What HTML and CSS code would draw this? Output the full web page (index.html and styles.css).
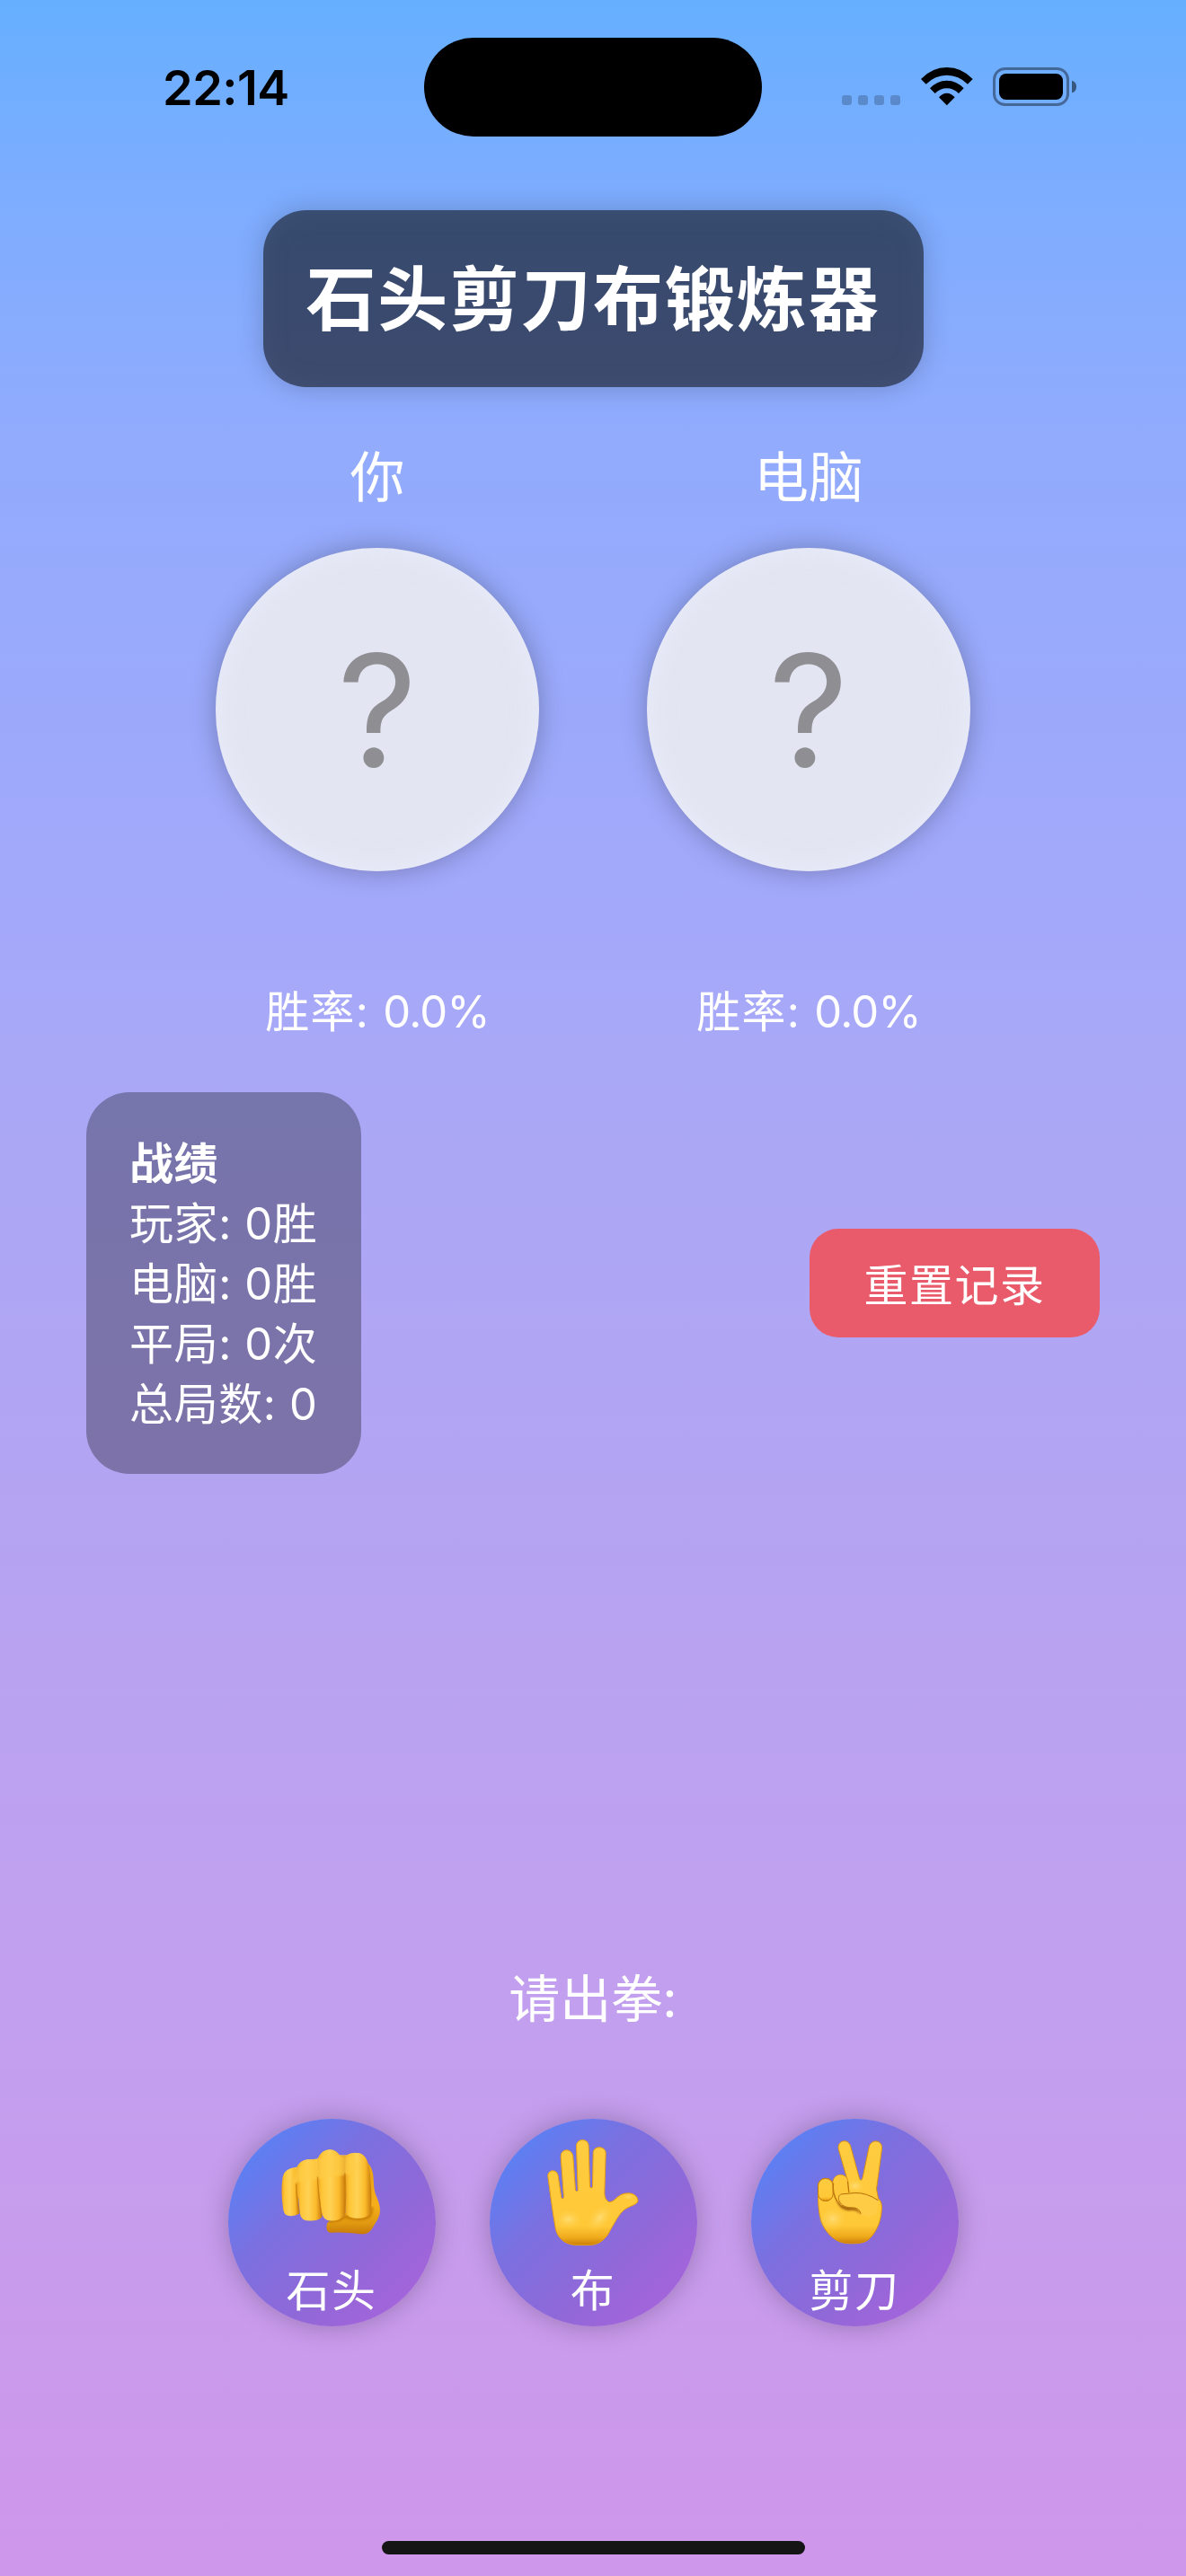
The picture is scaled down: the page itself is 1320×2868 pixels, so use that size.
FILE: index.html
```html
<!DOCTYPE html>
<html lang="zh-CN">
<head>
  <meta charset="UTF-8">
  <meta name="viewport" content="width=device-width, initial-scale=1.0">
  <title>石头剪刀布锻炼器</title>
  <link rel="stylesheet" href="styles.css">
</head>
<body>
  <div class="status-bar">
    <div class="time">22:14</div>
    <div class="island"></div>
    <div class="status-icons">
      <svg class="signal" width="65" height="11" viewBox="0 0 65 11">
        <rect x="0" y="0" width="11" height="11" rx="3"/>
        <rect x="18" y="0" width="11" height="11" rx="3"/>
        <rect x="36" y="0" width="11" height="11" rx="3"/>
        <rect x="54" y="0" width="11" height="11" rx="3"/>
      </svg>
      <svg class="wifi" width="58" height="43" viewBox="374 75 174 129">
        <path d="M374 114 Q411 75 460.500 75 Q510 75 547 114 L530 131 Q500 101 460.500 101 Q421 101 391 131Z"/>
        <path d="M404 145 Q428 119 460.500 119 Q493 119 517 145 L500 162 Q483 145 460.500 145 Q438 145 421 162Z"/>
        <path d="M434 175 Q445 161 460.500 161 Q476 161 487 175 L460.500 202Z"/>
      </svg>
      <svg class="battery" width="93" height="43" viewBox="0 0 279 129">
        <rect x="4.500" y="4.500" width="246" height="120" rx="36" fill="none" stroke="#000" stroke-opacity=".4" stroke-width="9"/>
        <rect x="21" y="21" width="213" height="87" rx="23"/>
        <path d="M264 44 Q279 48 279 64.500 Q279 81 264 85Z" fill-opacity=".5"/>
      </svg>
    </div>
  </div>

  <main>
    <h1 class="title">石头剪刀布锻炼器</h1>

    <div class="players">
      <div class="player">
        <div class="name">你</div>
        <div class="hand">?</div>
        <div class="rate">胜率: <span>0.0%</span></div>
      </div>
      <div class="player">
        <div class="name">电脑</div>
        <div class="hand">?</div>
        <div class="rate">胜率: <span>0.0%</span></div>
      </div>
    </div>

    <div class="record-row">
      <div class="record">
        <div class="record-title">战绩</div>
        <div>玩家: 0胜</div>
        <div>电脑: 0胜</div>
        <div>平局: 0次</div>
        <div>总局数: 0</div>
      </div>
      <button class="reset">重置记录</button>
    </div>

    <div class="prompt">请出拳:</div>

    <div class="choices">
      <button class="choice">
        <svg viewBox="208.500 110 360 380">
          <defs>
            <linearGradient id="finger" x1="0" x2="1" y1="0" y2="0">
              <stop offset="0" stop-color="#e9a11c"/>
              <stop offset=".16" stop-color="#ffc536"/>
              <stop offset=".45" stop-color="#ffd255"/>
              <stop offset=".76" stop-color="#fbbb2c"/>
              <stop offset="1" stop-color="#c77808"/>
            </linearGradient>
            <linearGradient id="thumb" x1="0" x2="0" y1="0" y2="1">
              <stop offset="0" stop-color="#e9a116"/>
              <stop offset=".6" stop-color="#f6ae1b"/>
              <stop offset=".85" stop-color="#e09910"/>
              <stop offset="1" stop-color="#c77a08"/>
            </linearGradient>
            <linearGradient id="skin" x1="0" x2="0" y1="0" y2="1">
              <stop offset="0" stop-color="#ffcc40"/>
              <stop offset=".82" stop-color="#ffc837"/>
              <stop offset=".93" stop-color="#efaa1c"/>
              <stop offset="1" stop-color="#cb7d08"/>
            </linearGradient>
            <radialGradient id="glow">
              <stop offset="0" stop-color="#ffdc72"/>
              <stop offset="1" stop-color="#ffcc40" stop-opacity="0"/>
            </radialGradient>
            <filter id="soft" x="-20%" y="-20%" width="140%" height="140%">
              <feGaussianBlur stdDeviation="3"/>
            </filter>
          </defs>
          <path fill="url(#thumb)" d="M500 200 Q520 205 526 235 C531 262 527 286 537 311 C549 338 553 356 549 374 C545 390 534 404 526 419 C516 437 502 442 484 440 C449 437 420 433 392 436 C377 437 371 430 372 414 Q372 398 388 396 L430 380Z"/>
          <path d="M380 397 Q415 398 433 382 Q465 396 508 385 Q523 378 523 350" fill="none" stroke="#b56a05" stroke-width="10" opacity=".6" filter="url(#soft)"/>
          <path fill="#ffc940" d="M240 228 Q255 218 273 217 Q283 195 305 192 Q325 192 342 189 Q355 158 384 158 Q404 159 415 177 L438 177 Q463 162 490 174 L500 300 L250 320Z"/>
          <path fill="url(#finger)" d="M245 224 Q260 217 270 223 L281 373 Q260 383 243 379 Q230 377 227 357 Q218 300 225 252 Q229 231 245 224Z"/>
          <path fill="url(#finger)" d="M272 221 Q283 194 308 191 L335 191 Q348 280 357 383 Q344 397 315 396 Q287 397 283 372 Q274 300 272 221Z"/>
          <path fill="url(#finger)" d="M340 195 Q354 158 382 158 Q403 159 415 177 L436 181 L434 374 Q418 397 386 396 Q359 396 354 364 Q344 280 340 195Z"/>
          <path fill="url(#finger)" d="M436 178 Q458 167 483 170 Q505 176 514 215 Q524 285 521 355 Q519 386 481 388 Q434 389 434 357Z"/>
          <path d="M272 220 L331 193 L390 175 L454 183 L479 220 L450 240 L260 270Z" fill="#ffce48" filter="url(#soft)" opacity=".65"/>
          <path d="M270 273 Q272 330 280 370 M342 249 Q344 318 356 378 M433 236 Q438 315 432 374" fill="none" stroke="#c67a0c" stroke-width="4" opacity=".7"/>
        </svg>
        <span>石头</span>
      </button>
      <button class="choice">
        <svg viewBox="211.500 110 360 380">
          <path fill="url(#skin)" stroke="#e59b14" stroke-width="3" d="M241 249 C238 224 271 222 275 245 L286 319 Q290 326 294 319 L284 183 C282 153 322 152 325 182 L333 294 Q337 302 341 294 L336 147 C336 119 377 119 377 147 L381 283 Q386 291 390 283 L392 170 C392 143 435 145 434 171 L430 303 C430 320 439 335 449 333 C468 331 474 302 512 304 C532 305 543 319 541 331 C538 343 519 344 498 358 C479 372 468 396 450 426 C436 458 410 477 380 477 L335 477 C302 477 274 456 267 425 C256 365 248 300 241 249Z"/>
          <ellipse cx="310" cy="391" rx="48" ry="35" fill="url(#glow)"/>
          <ellipse cx="414" cy="386" rx="35" ry="57" transform="rotate(42 414 386)" fill="url(#glow)"/>
          <ellipse cx="510" cy="316" rx="20" ry="9" fill="url(#glow)"/>
        </svg>
        <span>布</span>
      </button>
      <button class="choice">
        <svg viewBox="214.500 110 360 380">
          <path fill="url(#skin)" stroke="#dc930f" stroke-width="3" d="M341 156 C336 126 375 119 382 149 L410 251 Q416 270 422 251 L443 151 C448 121 490 124 486 156 L468 290 L474 322 Q489 333 485 364 C482 405 463 441 439 461 Q421 473 382 472 Q342 472 318 449 C282 418 274 376 273 319 L273 283 C272 250 312 246 322 269 C324 235 369 235 372 263Z"/>
          <ellipse cx="397" cy="280" rx="38" ry="25" fill="url(#glow)"/>
          <ellipse cx="322" cy="389" rx="48" ry="42" fill="url(#glow)"/>
          <ellipse cx="443" cy="356" rx="32" ry="36" fill="url(#glow)"/>
          <path d="M340 325 Q353 351 383 351 Q406 349 416 376 Q401 356 374 362 Q342 356 335 329Z" fill="#8b4804" filter="url(#soft)" opacity=".8"/>
          <rect x="273" y="255" width="50" height="75" rx="24" fill="url(#skin)" stroke="#bd740b" stroke-width="3"/>
          <path d="M324 267 Q326 244 347 243 Q370 244 372 268 L376 304 L344 309 L341 334 Q323 318 324 267Z" fill="#ffc83b"/>
          <path d="M372 264 L376 302 M324 270 Q320 305 337 332" fill="none" stroke="#bd740b" stroke-width="4"/>
          <path d="M350 307 Q401 298 436 308 Q457 316 475 329 L467 376 L416 375 Q411 350 381 352 C350 351 339 337 340 321 Q341 309 350 307Z" fill="#ffcd45"/>
          <path d="M474 328 Q435 302 397 303 L352 307 C333 310 339 350 381 352 Q411 350 416 373" fill="none" stroke="#b66c08" stroke-width="3"/>
        </svg>
        <span>剪刀</span>
      </button>
    </div>
  </main>

  <div class="home-indicator"></div>
</body>
</html>
```
FILE: styles.css
```css
* {
  box-sizing: border-box;
}
body {
  margin: 0;
  height: 2868px;
  display: flex;
  flex-direction: column;
  align-items: center;
  font-family: Inter, 'Noto Sans CJK SC', sans-serif;
  font-size: 49px;
  color: white;
  background: linear-gradient(180deg, #66afff 0, #7badff 190px, #91abfd 480px, #a4a8fa 1030px, #a9a8f6 1200px, #b4a4f2 1680px, #c1a0ef 2170px, #cf97eb 100%);
}
button {
  border: none;
  color: white;
  font: inherit;
  cursor: pointer;
}

/* status bar */
.status-bar {
  width: 100%;
  height: 234px;
  padding: 42px 122px 0 181px;
  display: flex;
  justify-content: space-between;
  align-items: flex-start;
}
.time {
  width: 291px;
  padding-top: 23px;
  font-size: 54px;
  font-weight: 600;
  line-height: 66px;
  letter-spacing: -0.5px;
  color: black;
}
.island {
  width: 376px;
  height: 110px;
  border-radius: 55px;
  background: black;
}
.status-icons {
  width: 350px;
  padding-top: 33px;
  display: flex;
  justify-content: flex-end;
}
.signal {
  margin: 31px 23px 0 0;
  opacity: .2;
}
.wifi {
  margin-right: 22px;
}

main {
  width: 100%;
  flex: 1;
  display: flex;
  flex-direction: column;
  align-items: center;
}
.title {
  width: 735px;
  height: 197px;
  margin: 0;
  border-radius: 48px;
  background: rgba(0,0,0,0.57);
  box-shadow: 0 0 30px rgba(0,0,0,0.2), inset 0 0 30px rgba(100,120,160,0.15);
  text-align: center;
  font-size: 78px;
  font-weight: 700;
  line-height: 200px;
  letter-spacing: 1.9px;
}

/* players */
.players {
  display: flex;
  gap: 120px;
  margin-top: 60px;
}
.player {
  width: 360px;
  text-align: center;
}
.name {
  height: 119px;
  font-size: 61px;
  line-height: 83px;
}
.hand {
  height: 360px;
  border-radius: 50%;
  background: #e3e5f2;
  box-shadow: 0 0 30px rgba(0,0,0,0.27), inset 0 0 30px rgba(236,240,255,0.7);
  color: #8e8e93;
  font-size: 174px;
  line-height: 362px;
}
.rate {
  margin-top: 126px;
  line-height: 61px;
  letter-spacing: 1.3px;
}
.rate span {
  letter-spacing: -0.8px;
}

/* record */
.record-row {
  width: 100%;
  padding: 0 96px;
  margin-top: 59px;
  display: flex;
  justify-content: space-between;
  align-items: center;
}
.record {
  width: 306px;
  height: 425px;
  padding: 49px 48px 47px;
  border-radius: 48px;
  background: rgba(0,0,0,0.3);
  display: flex;
  flex-direction: column;
  gap: 6px;
  line-height: 61px;
  letter-spacing: 0.6px;
  white-space: nowrap;
}
.record-title {
  font-weight: 600;
}
.reset {
  width: 323px;
  height: 121px;
  padding: 0 0 3px;
  border-radius: 32px;
  background: #e95b6a;
  letter-spacing: 1.5px;
}

/* choices */
.prompt {
  margin-top: 549px;
  font-size: 57px;
  line-height: 72px;
}
.choices {
  display: flex;
  gap: 60px;
  margin-top: 97px;
}
.choice {
  width: 231px;
  height: 231px;
  padding: 18px 0 0;
  border-radius: 50%;
  background: linear-gradient(135deg, #5583f7 8%, #7b70e0 37%, #9168d8 65%, #a963db 93%);
  box-shadow: 0 0 30px rgba(0,0,0,0.25);
  display: flex;
  flex-direction: column;
  align-items: center;
}
.choice svg {
  width: 120px;
  height: 127px;
}
.choice span {
  margin-top: 16px;
  line-height: 61px;
  letter-spacing: 1.5px;
}

.home-indicator {
  width: 471px;
  height: 15px;
  margin-bottom: 24px;
  border-radius: 8px;
  background: #151515;
}
```
